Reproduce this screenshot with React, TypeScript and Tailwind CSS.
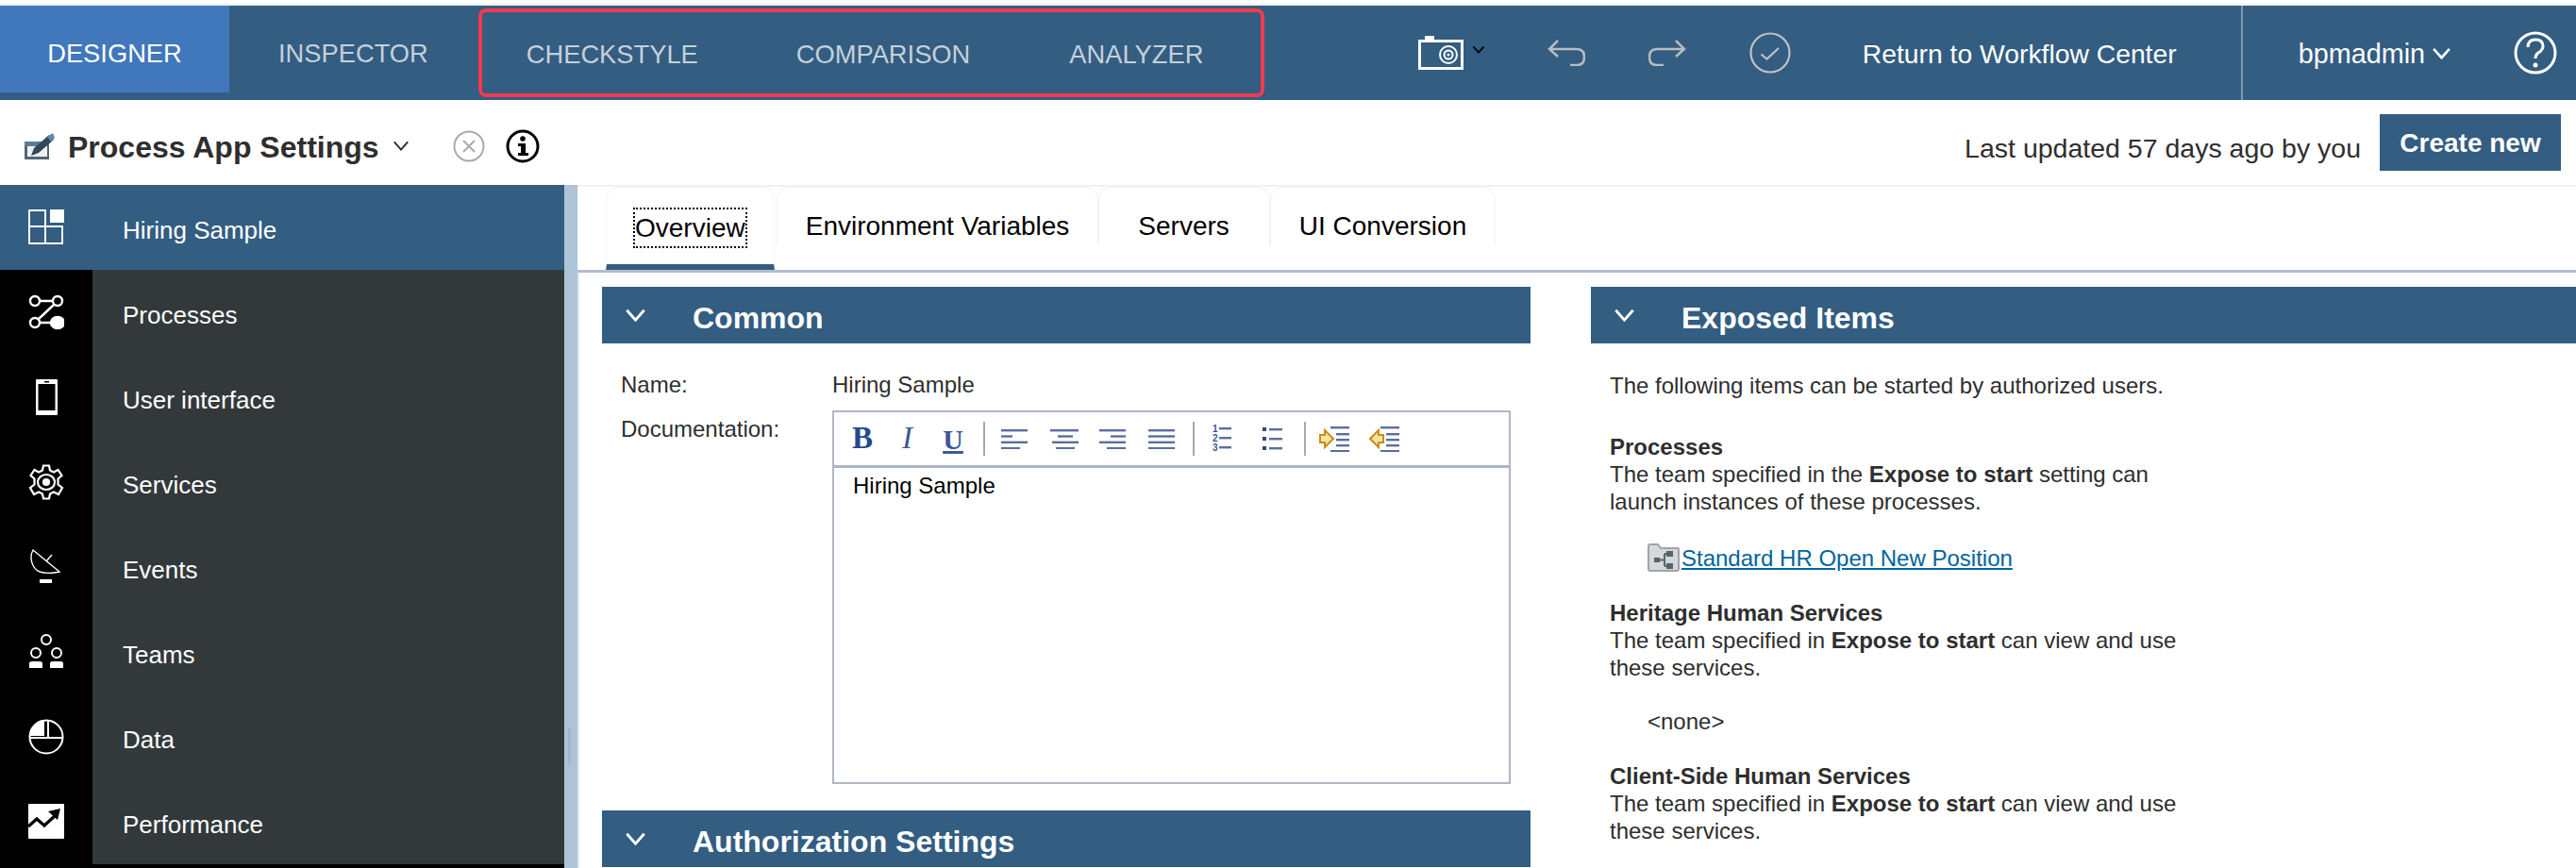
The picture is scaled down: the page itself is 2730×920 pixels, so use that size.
import React from "react";

const font = { fontFamily: '"Liberation Sans", Arial, sans-serif' };

function Chevron({ className = "", w = 20, h = 12, sw = 2.5 }: { className?: string; w?: number; h?: number; sw?: number }) {
  return (
    <svg width={w} height={h} viewBox="0 0 20 12" className={className} fill="none" stroke="currentColor" strokeWidth={sw}>
      <path d="M2 1.5 L10 10.5 L18 1.5" />
    </svg>
  );
}

const sideIcons: Record<string, React.ReactNode> = {
  grid: (
    <svg width="38" height="38" viewBox="0 0 38 38" fill="none" stroke="#fff" strokeWidth="2">
      <rect x="1" y="1" width="17" height="17" />
      <rect x="1" y="18" width="17" height="18" />
      <rect x="18" y="18" width="18" height="18" />
      <rect x="23" y="0" width="15" height="14" fill="#fff" stroke="none" />
    </svg>
  ),
  proc: (
    <svg width="38" height="38" viewBox="0 0 38 38" fill="none" stroke="#fff" strokeWidth="2.4">
      <circle cx="7" cy="7" r="5" />
      <circle cx="31" cy="7" r="5" />
      <circle cx="7" cy="30" r="5" />
      <ellipse cx="31" cy="30" rx="7" ry="6" fill="#fff" />
      <path d="M12 7H26M12 30H25M27 11L11 26" />
    </svg>
  ),
  phone: (
    <svg width="38" height="38" viewBox="0 0 38 38">
      <rect x="8" y="0" width="23" height="38" rx="1" fill="#fff" />
      <rect x="10.500" y="5" width="18" height="28" fill="#000" />
      <rect x="17" y="2" width="5" height="1.500" fill="#000" />
    </svg>
  ),
  gear: (
    <svg width="38" height="38" viewBox="0 0 38 38" fill="none" stroke="#fff" strokeWidth="2.200">
      <path d="M16 1.500H22L23 6.500L27 8.500L31.500 6L35.500 12L31.500 15.500V21.500L36 25L32 32L27 29.500L23 31.500L22 36.500H16L15 31.500L11 29.500L6 32L2 25L6.500 21.500V15.500L2.500 12L6.500 6L11 8.500L15 6.500Z" />
      <ellipse cx="19" cy="19" rx="9" ry="8" />
      <circle cx="19" cy="19" r="3" fill="#fff" />
    </svg>
  ),
  dish: (
    <svg width="38" height="38" viewBox="0 0 38 38" fill="none" stroke="#fff" strokeWidth="1.400">
      <path d="M5 1C1 8 3 20 12 24C20 27 27 25 33 24Z" />
      <path d="M19 13L25 6" />
      <rect x="12" y="32" width="13" height="4" fill="#fff" stroke="none" />
    </svg>
  ),
  team: (
    <svg width="38" height="38" viewBox="0 0 38 38" fill="none" stroke="#fff" strokeWidth="2">
      <circle cx="19" cy="6" r="5" />
      <circle cx="8" cy="20" r="5" />
      <circle cx="30" cy="20" r="5" />
      <path d="M1 36V31Q1 29 4 29H12Q15 29 15 31V36Z" fill="#fff" stroke="none" />
      <path d="M23 36V31Q23 29 26 29H34Q37 29 37 31V36Z" fill="#fff" stroke="none" />
    </svg>
  ),
  pie: (
    <svg width="38" height="38" viewBox="0 0 38 38" fill="none" stroke="#fff" strokeWidth="2">
      <circle cx="19" cy="19" r="17.500" />
      <path d="M1.500 20H36.500M21 1.500V20" />
      <path d="M17 1.500A17.500 17.500 0 0 0 1.500 18H17Z" fill="#fff" stroke="none" />
    </svg>
  ),
  perf: (
    <svg width="38" height="38" viewBox="0 0 38 38">
      <rect x="0" y="0" width="38" height="37" rx="1" fill="#fff" />
      <path d="M0 24L9 16L17 23L30 11" fill="none" stroke="#000" strokeWidth="3.200" />
      <path d="M21 8L34 5L31 17Z" fill="#000" />
    </svg>
  ),
};

function SideRow({ icon, label, active }: { icon: string; label: string; active?: boolean }) {
  return (
    <div className={`flex h-[90px] items-stretch ${active ? "bg-[#335d81]" : "bg-[#33393b]"}`}>
      <div className={`flex w-[98px] shrink-0 items-start justify-center pt-[26px] ${active ? "" : "bg-black"}`}>
        {sideIcons[icon]}
      </div>
      <div className="flex items-center pl-[32px] pt-[7px] text-[26px] text-white">{label}</div>
    </div>
  );
}

function SectionBar({ title, w }: { title: string; w: string }) {
  return (
    <div className={`flex h-[60px] items-center bg-[#335d81] text-white ${w}`}>
      <Chevron className="ml-[24px]" w={23} h={14} />
      <span className="ml-[49px] pt-[6px] text-[32px] font-bold">{title}</span>
    </div>
  );
}

function Tab({ label, className = "" }: { label: string; className?: string }) {
  return (
    <div className={`h-[62px] self-start rounded-t-[14px] border-x border-t border-[#f3f3f3] pt-[25px] text-[28px] leading-[32px] text-black ${className}`}>
      {label}
    </div>
  );
}

function Bar({ className }: { className: string }) {
  return <span className={`h-[36px] w-[2px] shrink-0 bg-[#a9a9a9] ${className}`} />;
}

function Lines({ kind, className }: { kind: "l" | "c" | "r" | "j"; className: string }) {
  const rows: [number, number][] =
    kind === "l"
      ? [[0, 28], [0, 12], [0, 28], [0, 20]]
      : kind === "c"
        ? [[0, 30], [8, 16], [2, 28], [6, 20]]
        : kind === "r"
          ? [[0, 28], [12, 16], [0, 28], [8, 20]]
          : [[0, 28], [0, 28], [0, 28], [0, 28]];
  return (
    <svg width={kind === "c" ? 30 : 28} height="22" viewBox={`0 0 ${kind === "c" ? 30 : 28} 22`} className={`shrink-0 ${className}`}>
      {rows.map(([x, w], i) => (
        <rect key={i} x={x} y={1 + i * 6.300} width={w} height="2.400" fill="#5a6f9c" />
      ))}
    </svg>
  );
}

export default function App() {
  return (
    <div className="h-[920px] w-[2730px] overflow-hidden bg-white" style={font}>
      <div className="h-[4px] bg-white" />
      <div className="h-[2px] bg-[#eeeeee]" />
      {/* top nav */}
      <div className="flex h-[100px] items-stretch bg-[#335d81] text-[27.3px]">
        <div className="mb-[8px] flex w-[243px] items-center justify-center bg-[#4177bb] pt-[10px] text-white">DESIGNER</div>
        <div className="mb-[8px] flex items-center pl-[52px] pr-[53px] pt-[10px] text-[#c5d0da]">INSPECTOR</div>
        <div className="my-[3px] flex w-[833px] items-center rounded-[8px] border-[4px] border-[#f43a4e] pt-[4px] text-[#c5d0da]">
          <span className="ml-[47px]">CHECKSTYLE</span>
          <span className="ml-[104px]">COMPARISON</span>
          <span className="ml-[105px]">ANALYZER</span>
        </div>
        <div className="ml-[163px] flex items-center">
          <svg width="48" height="36" viewBox="0 0 48 36" fill="none" stroke="#fff" strokeWidth="3">
            <path d="M1.500 5.500H46.500V34.500H1.500Z" />
            <rect x="7" y="0" width="10" height="5" fill="#fff" stroke="none" />
            <circle cx="32" cy="20" r="9" strokeWidth="2" />
            <circle cx="32" cy="20" r="4.500" strokeWidth="2" />
            <circle cx="32" cy="20" r="1.500" fill="#fff" stroke="none" />
          </svg>
          <Chevron className="mb-[8px] ml-[9px]" w={14} h={9} sw={2.400} />
          <svg width="40" height="28" viewBox="0 0 40 28" fill="none" stroke="#b9bcc0" strokeWidth="2.500" className="ml-[66px]">
            <path d="M11 1L2 10L11 18M2 10H31Q39 10 39 18.500Q39 27 31 27H24" />
          </svg>
          <svg width="40" height="28" viewBox="0 0 40 28" fill="none" stroke="#b9bcc0" strokeWidth="2.500" className="ml-[67px]">
            <path d="M29 1L38 10L29 18M38 10H9Q1 10 1 18.500Q1 27 9 27H16" />
          </svg>
          <svg width="44" height="44" viewBox="0 0 44 44" fill="none" stroke="#c0c2c4" strokeWidth="2.200" className="ml-[67px]">
            <circle cx="22" cy="22" r="20.500" />
            <path d="M12.500 23.500L18.500 28.500L31 17" />
          </svg>
          <span className="ml-[76px] pt-[3px] text-[28.300px] text-white">Return to Workflow Center</span>
        </div>
        <div className="ml-[68px] flex flex-1 items-center border-l-2 border-[#7c99b2] pl-[59px] text-white">
          <span className="pt-[3px] text-[28.800px]">bpmadmin</span>
          <Chevron className="ml-[7px]" w={21} h={13} />
          <svg width="46" height="46" viewBox="0 0 46 46" fill="none" stroke="#fff" strokeWidth="3" className="ml-[66px]">
            <circle cx="23" cy="23" r="21" />
            <path d="M15 17Q15 9 23 9Q31 9 31 16Q31 20 26 23Q23 25 23 29" />
            <circle cx="23" cy="36" r="2.500" fill="#fff" stroke="none" />
          </svg>
        </div>
      </div>
      {/* sub header */}
      <div className="flex h-[90px] items-center bg-white">
        <svg width="32" height="29" viewBox="0 0 32 29" className="ml-[26px] mt-[8px]">
          <rect x="0" y="9" width="26" height="19" fill="#56646f" />
          <rect x="0" y="9" width="26" height="5" fill="#5d7a94" />
          <rect x="3" y="14" width="21" height="11" fill="#eef1f4" />
          <path d="M7 24L10 16L26 2L31 7L15 21Z" fill="#33475a" />
          <path d="M24 4L30 0L32 5L28 9Z" fill="#5f89ad" />
        </svg>
        <span className="ml-[14px] mt-[10px] text-[32px] font-bold text-[#2e2e2e]">Process App Settings</span>
        <Chevron className="ml-[14px] mt-[7px] text-[#2e2e2e]" w={18} h={11} sw={2.200} />
        <svg width="34" height="34" viewBox="0 0 34 34" fill="none" stroke="#aaaaaa" strokeWidth="2" className="ml-[46px] mt-[8px]">
          <circle cx="17" cy="17" r="15.500" />
          <path d="M11 11L23 23M23 11L11 23" />
        </svg>
        <svg width="36" height="36" viewBox="0 0 36 36" className="ml-[22px] mt-[8px]">
          <circle cx="18" cy="18" r="16" fill="none" stroke="#000" strokeWidth="3" />
          <circle cx="18" cy="10" r="2.800" fill="#000" />
          <path d="M13 15H21V25H24V28H13V25H16V18H13Z" fill="#000" />
        </svg>
        <span className="ml-auto mt-[12px] text-[28.500px] text-[#2e2e2e]">Last updated 57 days ago by you</span>
        <div className="ml-[20px] mr-[16px] flex h-[60px] w-[192px] items-center justify-center bg-[#335d81] pt-[1px] text-[28px] font-bold text-white">
          Create new
        </div>
      </div>
      {/* body */}
      <div className="flex h-[724px] items-stretch">
        <div className="w-[598px] shrink-0 bg-black">
          <SideRow icon="grid" label="Hiring Sample" active />
          <SideRow icon="proc" label="Processes" />
          <SideRow icon="phone" label="User interface" />
          <SideRow icon="gear" label="Services" />
          <SideRow icon="dish" label="Events" />
          <SideRow icon="team" label="Teams" />
          <SideRow icon="pie" label="Data" />
          <SideRow icon="perf" label="Performance" />
        </div>
        <div className="w-[14px] shrink-0 bg-[#adc4d6] pl-[4px] pt-[575px]">
          <div className="h-[40px] w-[3px] bg-[#a3b7c7]" />
        </div>
        <div className="min-w-0 flex-1 border-t-2 border-[#f1f1f1]">
          <div className="flex h-[91px] items-start border-b-[3px] border-[#b3bccd] pl-[30px]">
            <div className="flex h-[88px] items-center justify-center rounded-t-[14px] border-x border-t border-b-[6px] border-x-[#f3f3f3] border-t-[#f3f3f3] border-b-[#335d81] px-[28px] pt-[4px] text-[28px] text-black">
              <span className="border-2 border-dotted border-black leading-[39px]">Overview</span>
            </div>
            <Tab label="Environment Variables" className="ml-[2px] px-[30px]" />
            <Tab label="Servers" className="pl-[41px] pr-[42px]" />
            <Tab label="UI Conversion" className="px-[30px]" />
          </div>
          <div className="flex h-[631px] border-l-2 border-[#e3e6ec] pt-[15px]">
            <div className="ml-[24px] w-[984px] shrink-0">
              <SectionBar title="Common" w="w-[984px]" />
              <div className="grid h-[495px] grid-cols-[224px_719px] grid-rows-[71px_1fr] pl-[20px] text-[24px] text-[#2e2e2e]">
                <div className="pt-[26px]">Name:</div>
                <div className="pt-[26px]">Hiring Sample</div>
                <div className="pt-[2px]">Documentation:</div>
                <div className="mb-[28px] flex flex-col border-2 border-[#aeb6c6]">
                  <div className="flex h-[59px] shrink-0 items-center border-b-[3px] border-[#aeb6c6]">
                    <span className="ml-[18px] w-[24px] text-center font-['Liberation_Serif'] text-[33px] font-bold text-[#234a8a]">B</span>
                    <span className="ml-[28px] w-[15px] text-center font-['Liberation_Serif'] text-[33px] italic text-[#3a5a8c]">I</span>
                    <span className="ml-[30px] w-[22px] text-center font-['Liberation_Serif'] text-[30px] font-bold text-[#3a5a9c] underline">U</span>
                    <Bar className="ml-[21px]" />
                    <Lines kind="l" className="ml-[17px]" />
                    <Lines kind="c" className="ml-[24px]" />
                    <Lines kind="r" className="ml-[22px]" />
                    <Lines kind="j" className="ml-[24px]" />
                    <Bar className="ml-[19px]" />
                    <svg width="20" height="30" viewBox="0 0 20 30" className="ml-[19px] shrink-0">
                      <text x="0" y="8" fontSize="10" fill="#2f5a96" fontWeight="bold">1</text>
                      <text x="0" y="18" fontSize="10" fill="#2f5a96" fontWeight="bold">2</text>
                      <text x="0" y="28" fontSize="10" fill="#2f5a96" fontWeight="bold">3</text>
                      <rect x="7" y="3" width="13" height="2.400" fill="#5a6f9c" />
                      <rect x="7" y="13" width="13" height="2.400" fill="#5a6f9c" />
                      <rect x="7" y="23" width="13" height="2.400" fill="#5a6f9c" />
                    </svg>
                    <svg width="21" height="30" viewBox="0 0 21 30" className="ml-[33px] shrink-0">
                      {[4, 14, 24].map((y) => (
                        <g key={y}>
                          <rect x="0" y={y - 1} width="4" height="4" fill="#2f4a7a" />
                          <rect x="7" y={y} width="14" height="2.400" fill="#5a6f9c" />
                        </g>
                      ))}
                    </svg>
                    <Bar className="ml-[23px]" />
                    {[0, 1].map((k) => (
                      <svg key={k} width="34" height="28" viewBox="0 0 34 28" className={`shrink-0 ${k === 0 ? "ml-[14px]" : "ml-[19px]"}`}>
                        <path
                          d={k === 0 ? "M1 10H6V5L15 14L6 23V18H1Z" : "M15 10H10V5L1 14L10 23V18H15Z"}
                          fill="#f6e3a6"
                          stroke="#c98f14"
                          strokeWidth="2"
                        />
                        {[1, 8, 14, 20, 26].map((y, i) => (
                          <rect key={y} x={i === 0 || i === 4 ? 12 : 18} y={y} width={i === 0 || i === 4 ? 20 : 14} height="2.400" fill="#5a6f9c" />
                        ))}
                      </svg>
                    ))}
                  </div>
                  <div className="px-[20px] pt-[1px] text-black">Hiring Sample</div>
                </div>
              </div>
              <SectionBar title="Authorization Settings" w="w-[984px]" />
            </div>
            <div className="ml-[64px] flex-1">
              <SectionBar title="Exposed Items" w="w-full" />
              <div className="w-[630px] pl-[20px] pt-[30px] text-[24px] leading-[29px] text-[#2e2e2e]">
                <p>The following items can be started by authorized users.</p>
                <p className="mt-[36px] font-bold">Processes</p>
                <p>
                  The team specified in the <b>Expose to start</b> setting can launch instances of these processes.
                </p>
                <div className="mt-[30px] flex h-[30px] items-center pl-[40px]">
                  <svg width="34" height="30" viewBox="0 0 34 30" className="mr-[2px] shrink-0">
                    <path d="M1 3Q1 1 3 1H11L14 5H32Q33 5 33 6V27Q33 29 31 29H3Q1 29 1 27Z" fill="#d6d8da" stroke="#a0a4a9" strokeWidth="2" />
                    <rect x="7" y="15" width="6" height="5" fill="#55646f" />
                    <path d="M12 17.500H18M18 11V24M18 11H22M18 24H22" stroke="#55646f" strokeWidth="2" fill="none" />
                    <rect x="20" y="8" width="7" height="6" fill="#55646f" />
                    <rect x="20" y="21" width="7" height="6" fill="#55646f" />
                  </svg>
                  <span className="text-[#00649d] underline">Standard HR Open New Position</span>
                </div>
                <p className="mt-[29px] font-bold">Heritage Human Services</p>
                <p>
                  The team specified in <b>Expose to start</b> can view and use these services.
                </p>
                <p className="mt-[28px] pl-[40px]">&lt;none&gt;</p>
                <p className="mt-[29px] font-bold">Client-Side Human Services</p>
                <p>
                  The team specified in <b>Expose to start</b> can view and use these services.
                </p>
              </div>
            </div>
          </div>
        </div>
      </div>
    </div>
  );
}
